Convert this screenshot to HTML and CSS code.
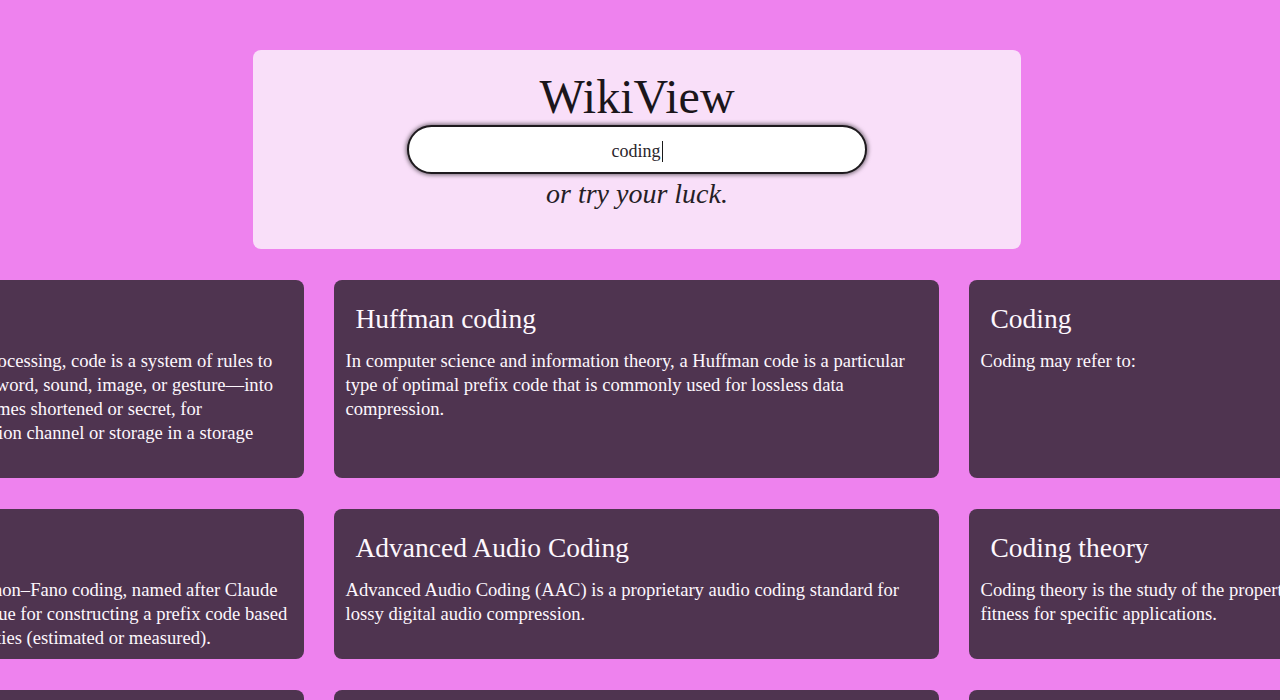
FILE: index.html
```html
<!DOCTYPE html>
<html lang="en">
<head>
<meta charset="utf-8">
<title>WikiView</title>
<link rel="stylesheet" href="styles.css">
</head>
<body>
<div class="page">
  <header class="hero-wrap">
    <div class="hero">
      <h1 class="logo">WikiView</h1>
      <div class="search">
        <span class="search-text">coding</span><span class="caret"></span>
      </div>
      <p class="luck">or try your luck.</p>
    </div>
  </header>
  <main class="results-wrap">
    <div class="results">
      <article class="card">
        <h2 class="card-title">Code</h2>
        <p class="card-text">In communications and information processing, code is a system of rules to convert information—such as a letter, word, sound, image, or gesture—into another form or representation, sometimes shortened or secret, for communication through a communication channel or storage in a storage medium.</p>
      </article>
      <article class="card">
        <h2 class="card-title">Huffman coding</h2>
        <p class="card-text">In computer science and information theory, a Huffman code is a particular type of optimal prefix code that is commonly used for lossless data compression.</p>
      </article>
      <article class="card">
        <h2 class="card-title">Coding</h2>
        <p class="card-text">Coding may refer to:</p>
      </article>
      <article class="card">
        <h2 class="card-title">Shannon–Fano coding</h2>
        <p class="card-text">In the field of data compression, Shannon–Fano coding, named after Claude Shannon and Robert Fano, is a technique for constructing a prefix code based on a set of symbols and their probabilities (estimated or measured).</p>
      </article>
      <article class="card">
        <h2 class="card-title">Advanced Audio Coding</h2>
        <p class="card-text">Advanced Audio Coding (AAC) is a proprietary audio coding standard for lossy digital audio compression.</p>
      </article>
      <article class="card">
        <h2 class="card-title">Coding theory</h2>
        <p class="card-text">Coding theory is the study of the properties of codes and their respective fitness for specific applications.</p>
      </article>
      <article class="card">
        <h2 class="card-title">Coding region</h2>
        <p class="card-text">The coding region of a gene, also known as the CDS (from coding sequence), is the portion of a gene's DNA or RNA that codes for protein.</p>
      </article>
      <article class="card">
        <h2 class="card-title">Line code</h2>
        <p class="card-text">In telecommunication, a line code is a pattern of voltage, current, or photons used to represent digital data transmitted down a transmission line.</p>
      </article>
      <article class="card">
        <h2 class="card-title">Entropy coding</h2>
        <p class="card-text">In information theory, an entropy coding is a lossless data compression scheme that is independent of the specific characteristics of the medium.</p>
      </article>
    </div>
  </main>
</div>
</body>
</html>
```
FILE: styles.css
```css
html, body {
  margin: 0;
  padding: 0;
}

body {
  background: #ee82ee;
  font-family: "Liberation Serif", "Times New Roman", serif;
  color: #1d171d;
  overflow: hidden;
}

.page {
  width: 1280px;
}

.hero-wrap {
  display: flex;
  justify-content: center;
  padding-top: 50px;
  padding-right: 6px;
}

.hero {
  width: 768px;
  box-sizing: border-box;
  background: #f9dff9;
  border-radius: 8px;
  padding: 19px 0 37px;
  display: flex;
  flex-direction: column;
  align-items: center;
}

.logo {
  margin: 0;
  font-weight: 400;
  font-size: 48px;
  line-height: 56px;
  color: #1b161b;
}

.search {
  width: 460px;
  height: 49px;
  box-sizing: border-box;
  padding-top: 3px;
  border: 2px solid #1e1a1e;
  border-radius: 25px;
  background: #fff;
  box-shadow: 0 0 4px 1px rgba(0, 0, 0, 0.55);
  display: flex;
  align-items: center;
  justify-content: center;
  font-size: 18px;
  color: #2a252a;
}

.caret {
  display: inline-block;
  width: 1px;
  height: 21px;
  background: #1a1a1a;
  margin-left: 1px;
}

.luck {
  margin: 2px 0 0;
  font-style: italic;
  font-size: 28px;
  line-height: 36px;
  color: #261e26;
}

.results-wrap {
  padding-top: 31px;
  padding-right: 8px;
  display: flex;
  justify-content: center;
  overflow: hidden;
}

.results {
  display: grid;
  grid-template-columns: repeat(3, 605px);
  justify-content: center;
  column-gap: 30px;
  row-gap: 31px;
  flex: none;
}

.card {
  background: #4f3450;
  border-radius: 8px;
  padding: 12px 12px 9px;
  color: #fdf7fd;
}

.card-title {
  margin: 10px 0 13px;
  padding-left: 10px;
  font-weight: 400;
  font-size: 27.5px;
  line-height: 34px;
}

.card-text {
  margin: 0;
  font-size: 18.6px;
  line-height: 24px;
}
```
